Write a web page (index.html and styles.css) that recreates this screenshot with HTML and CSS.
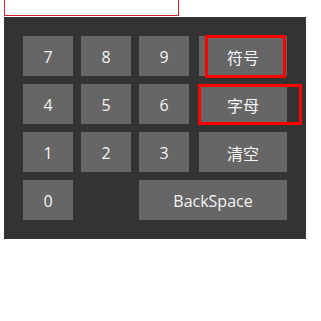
FILE: index.html
```html
<!DOCTYPE html>
<html>
<head>
<meta charset="utf-8">
<link rel="stylesheet" href="styles.css">
</head>
<body>
<div class="page">
  <div class="input-box"></div>
  <div class="keypad">
    <div class="key">7</div>
    <div class="key">8</div>
    <div class="key">9</div>
    <div class="key wide">符号</div>
    <div class="key">4</div>
    <div class="key">5</div>
    <div class="key">6</div>
    <div class="key wide">字母</div>
    <div class="key">1</div>
    <div class="key">2</div>
    <div class="key">3</div>
    <div class="key wide">清空</div>
    <div class="key">0</div>
    <div class="blank"></div>
    <div class="key backspace">BackSpace</div>
  </div>
  <div class="mark mark-symbol"></div>
  <div class="mark mark-letter"></div>
</div>
</body>
</html>
```

FILE: styles.css
```css
html, body {
  margin: 0;
  padding: 0;
  background: #ffffff;
}

.page {
  position: relative;
  width: 321px;
  height: 321px;
  padding-left: 4px;
  box-sizing: border-box;
  font-family: "Open Sans", "Noto Sans CJK SC", sans-serif;
}

.input-box {
  width: 175px;
  height: 16px;
  box-sizing: border-box;
  border: 1px solid #c8262a;
  border-top: none;
  background: #ffffff;
  margin-bottom: 1px;
}

.keypad {
  width: 302px;
  box-sizing: border-box;
  padding: 19px;
  background: #333333;
  display: grid;
  grid-template-columns: 50px 50px 50px 90px;
  grid-auto-rows: 40px;
  column-gap: 8px;
  row-gap: 8px;
}

.key {
  background: #666666;
  color: #f4f4f4;
  font-size: 16px;
  padding-top: 1px;
  box-sizing: border-box;
  display: flex;
  align-items: center;
  justify-content: center;
}

.key.wide {
  width: 88px;
  justify-self: end;
}

.key.backspace {
  grid-column: 3 / span 2;
  width: 148px;
  justify-self: start;
}

.mark {
  position: absolute;
  border: 3px solid #ff0000;
  box-sizing: border-box;
}

.mark-symbol {
  left: 205px;
  top: 35px;
  width: 81px;
  height: 43px;
}

.mark-letter {
  left: 198px;
  top: 84px;
  width: 104px;
  height: 41px;
}
```
